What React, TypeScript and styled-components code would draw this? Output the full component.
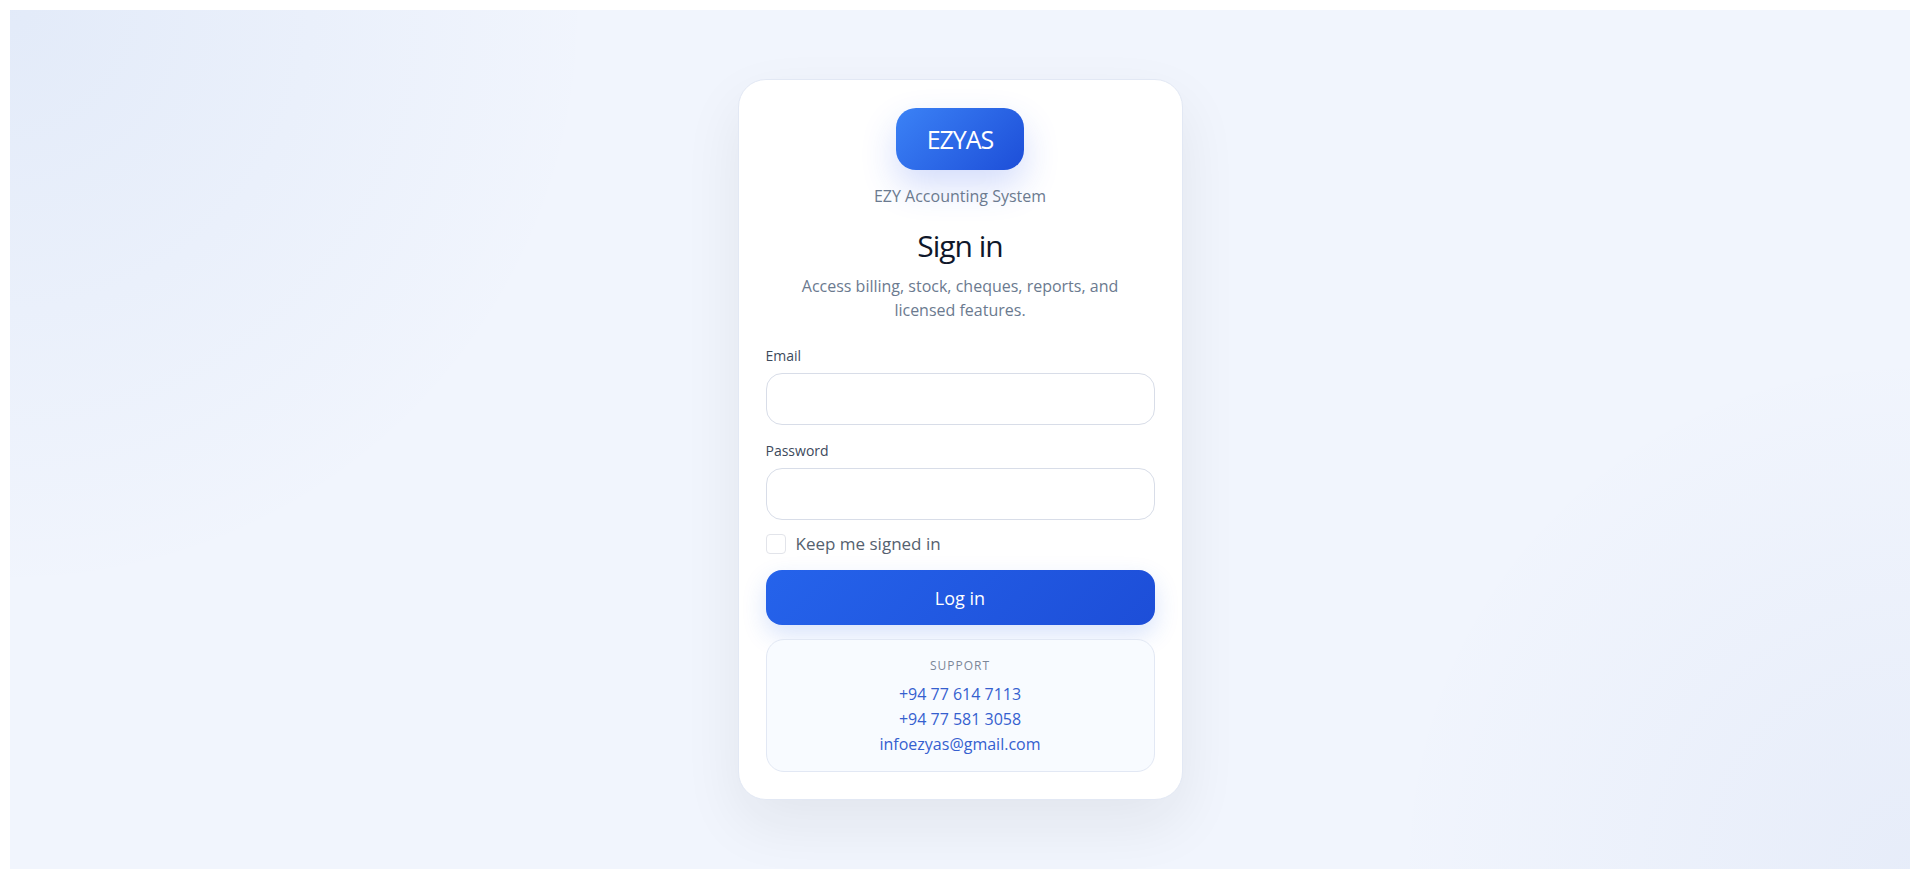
import React from "react";
import styled, { createGlobalStyle } from "styled-components";

const GlobalStyle = createGlobalStyle`
  *, *::before, *::after { box-sizing: border-box; }
  body {
    margin: 0;
    background: #fff;
    color: #0f172a;
    font-family: "Segoe UI", "Open Sans", "Noto Sans", sans-serif;
    font-size: 16px;
    line-height: 24px;
  }
  button, input { font: inherit; }
`;

const Page = styled.main`
  display: grid;
  place-items: center;
  min-height: calc(100vh - 20px);
  margin: 10px;
  padding: 30px;
  background:
    radial-gradient(circle at top left, rgba(37, 99, 195, 0.07), transparent 28%),
    radial-gradient(circle at bottom right, rgba(37, 80, 180, 0.05), transparent 25%),
    #f1f5fd;
`;

const Card = styled.section`
  width: 100%;
  max-width: 445px;
  padding: 28px 27px 27px;
  border: 1px solid #e2e8f4;
  border-radius: 28px;
  background: #fff;
  box-shadow: 0 24px 60px rgba(24, 32, 24, 0.07);
`;

const Brand = styled.header`
  display: flex;
  flex-direction: column;
  align-items: center;
  text-align: center;
`;

const Logo = styled.div`
  display: flex;
  align-items: center;
  justify-content: center;
  width: 128px;
  height: 62px;
  border-radius: 20px;
  background: linear-gradient(135deg, #3b82f6, #1d4ed8);
  box-shadow: 0 16px 36px rgba(37, 80, 235, 0.2);
  color: #fff;
  font-size: 25px;
  letter-spacing: -1px;
`;

const Tagline = styled.p`
  margin: 14px 0 20px;
  color: #6b7a8f;
`;

const Title = styled.h1`
  margin: 0;
  font-size: 30px;
  font-weight: 400;
  line-height: 36px;
  letter-spacing: -1px;
`;

const Intro = styled.p`
  max-width: 350px;
  margin: 10px 0 22px;
  color: #6b7a8f;
`;

const Form = styled.form`
  display: flex;
  flex-direction: column;
  gap: 12px;
`;

const Fields = styled.div`
  display: flex;
  flex-direction: column;
  gap: 14px;
`;

const Field = styled.div`
  display: flex;
  flex-direction: column;
  gap: 5px;
`;

const Label = styled.label`
  color: #3d4a5c;
  font-size: 14px;
`;

const TextInput = styled.input`
  width: 100%;
  height: 52px;
  padding: 0 16px;
  border: 1px solid #d8dde8;
  border-radius: 16px;
  background: #fff;
  outline: none;
  &:focus { border-color: #2563eb; }
`;

const Remember = styled.label`
  display: flex;
  align-items: center;
  gap: 10px;
  color: #55616f;
  font-size: 17px;
`;

const Checkbox = styled.input`
  appearance: none;
  width: 20px;
  height: 20px;
  margin: 0;
  border: 1px solid #e2e4ea;
  border-radius: 4px;
  background: #fff;
  &:checked { background: #2563eb; }
`;

const Submit = styled.button`
  height: 55px;
  margin-top: 2px;
  border: 0;
  border-radius: 16px;
  background: linear-gradient(135deg, #2563eb, #1d4ed8);
  box-shadow: 0 10px 24px rgba(37, 99, 235, 0.18);
  color: #fff;
  font-size: 18px;
  cursor: pointer;
`;

const Support = styled.aside`
  position: relative;
  display: flex;
  flex-direction: column;
  align-items: center;
  margin-top: 14px;
  padding: 14px;
  border: 1px solid #e2e8f4;
  border-radius: 18px;
  background: #f8fbff;
`;

const SupportHeading = styled.h2`
  margin: 0 0 4px;
  color: #7b8698;
  font-size: 12px;
  font-weight: 400;
  letter-spacing: 1px;
  text-transform: uppercase;
`;

const SupportLink = styled.a`
  color: #3560cf;
  line-height: 25px;
  text-decoration: none;
`;

export default function App() {
  return (
    <>
      <GlobalStyle />
      <Page>
        <Card>
          <Brand>
            <Logo>EZYAS</Logo>
            <Tagline>EZY Accounting System</Tagline>
            <Title>Sign in</Title>
            <Intro>Access billing, stock, cheques, reports, and licensed features.</Intro>
          </Brand>
          <Form onSubmit={(event) => event.preventDefault()}>
            <Fields>
              <Field>
                <Label htmlFor="email">Email</Label>
                <TextInput id="email" type="email" autoComplete="username" />
              </Field>
              <Field>
                <Label htmlFor="password">Password</Label>
                <TextInput id="password" type="password" autoComplete="current-password" />
              </Field>
            </Fields>
            <Remember>
              <Checkbox type="checkbox" />
              Keep me signed in
            </Remember>
            <Submit type="submit">Log in</Submit>
          </Form>
          <Support>
            <SupportHeading>Support</SupportHeading>
            <SupportLink href="tel:+94776147113">+94 77 614 7113</SupportLink>
            <SupportLink href="tel:+94775813058">+94 77 581 3058</SupportLink>
            <SupportLink href="mailto:infoezyas@gmail.com">infoezyas@gmail.com</SupportLink>
          </Support>
        </Card>
      </Page>
    </>
  );
}
